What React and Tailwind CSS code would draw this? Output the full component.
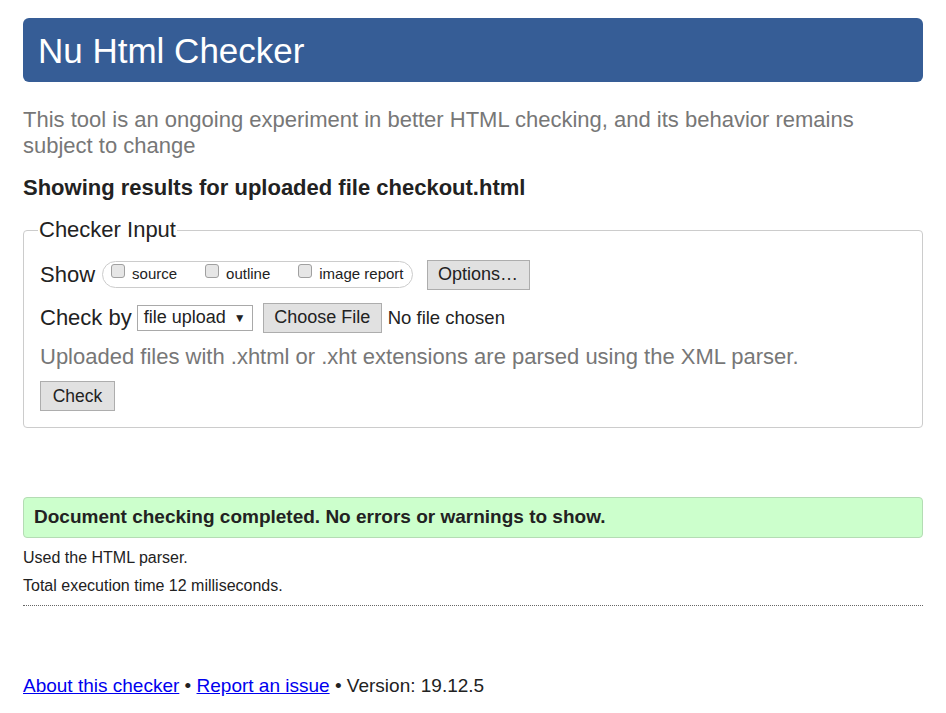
export default function App() {
  return (
    <div className="min-h-[713px] bg-white px-[23px] pt-[18px] font-['Liberation_Sans',Arial,sans-serif] text-[#222]">
      {/* Header */}
      <div className="flex h-[64px] items-center rounded-[6px] bg-[#365d96] pl-[15px]">
        <h1 className="text-[35px] leading-none text-white">Nu Html Checker</h1>
      </div>

      <p className="mt-[25px] pr-[60px] text-[22px] leading-[26px] text-[#777]">
        This tool is an ongoing experiment in better HTML checking, and its behavior remains subject to change
      </p>

      <p className="mt-[16px] text-[22px] font-bold leading-[26px] text-[#222]">
        Showing results for uploaded file checkout.html
      </p>

      {/* Checker input */}
      <fieldset className="mt-[17px] rounded-[4px] border border-[#ccc] pb-[16px] pl-[16px] pr-4">
        <legend className="ml-[-2px] px-[1px] text-[22px] leading-[24px]">Checker Input</legend>

        <div className="mt-[16px] flex items-center">
          <span className="text-[22px]">Show</span>
          <div className="ml-[7px] flex h-[27px] items-center rounded-full border border-[#ccc] pl-[8px] pr-[8px] text-[15px]">
            <label className="flex items-center">
              <span className="mb-[7px] inline-block size-[14px] rounded-[3px] border border-[#a0a0a0] bg-[#e6e6e6]" />
              <span className="ml-[7px]">source</span>
            </label>
            <label className="ml-[28px] flex items-center">
              <span className="mb-[7px] inline-block size-[14px] rounded-[3px] border border-[#a0a0a0] bg-[#e6e6e6]" />
              <span className="ml-[7px]">outline</span>
            </label>
            <label className="ml-[28px] flex items-center">
              <span className="mb-[7px] inline-block size-[14px] rounded-[3px] border border-[#a0a0a0] bg-[#e6e6e6]" />
              <span className="ml-[7px]">image report</span>
            </label>
          </div>
          <button className="ml-[14px] h-[30px] w-[103px] border border-[#adadad] bg-[#e1e1e1] text-[18px]">
            Options…
          </button>
        </div>

        <div className="mt-[10px] flex items-center">
          <span className="text-[22px]">Check by</span>
          <div className="ml-[5px] flex h-[26px] w-[116px] items-center border border-[#a9a9a9] bg-white pl-[6px] text-[18px]">
            <span>file upload</span>
            <span className="ml-[8px] text-[12px]">▼</span>
          </div>
          <button className="ml-[10px] h-[30px] w-[119px] border border-[#adadad] bg-[#e1e1e1] text-[18px]">
            Choose File
          </button>
          <span className="ml-[6px] text-[18.5px]">No file chosen</span>
        </div>

        <p className="mt-[10px] text-[22px] leading-[26px] text-[#777]">
          Uploaded files with .xhtml or .xht extensions are parsed using the XML parser.
        </p>

        <button className="mt-[11px] h-[30px] w-[75px] border border-[#adadad] bg-[#e1e1e1] text-[17.5px]">
          Check
        </button>
      </fieldset>

      {/* Result */}
      <div className="mt-[69px] flex h-[41px] items-center rounded-[4px] border border-[#b4dcb4] bg-[#ccffcc] pl-[10px]">
        <p className="text-[19px] font-bold">Document checking completed. No errors or warnings to show.</p>
      </div>

      <p className="mt-[10px] text-[16px] leading-[20px]">Used the HTML parser.</p>
      <p className="mt-[8px] text-[16px] leading-[20px]">Total execution time 12 milliseconds.</p>
      <div className="mt-[9px] border-t border-dotted border-[#666]" />

      <p className="mt-[66px] text-[19px]">
        <a href="#" className="text-[#0000ee] underline">About this checker</a>
        {' • '}
        <a href="#" className="text-[#0000ee] underline">Report an issue</a>
        {' • Version: 19.12.5'}
      </p>
    </div>
  );
}
